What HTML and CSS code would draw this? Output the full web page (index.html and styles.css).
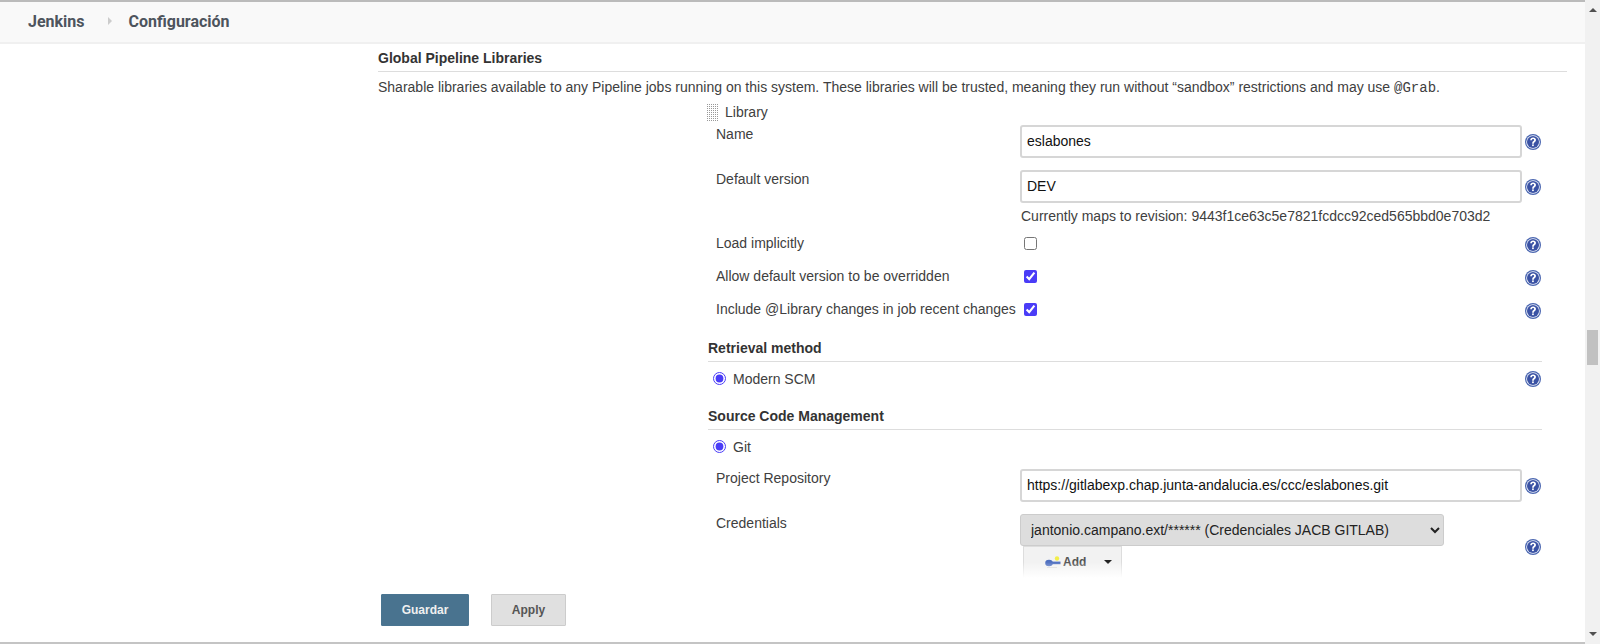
FILE: index.html
```html
<html lang="en">
<head>
<title>Configuración - Jenkins</title>
<link rel="stylesheet" href="styles.css">
</head>
<body>
<svg class="defs" width="0" height="0">
  <symbol id="help" viewBox="0 0 16 16">
    <circle cx="8" cy="8" r="8" fill="#4a66b0"/>
    <circle cx="8" cy="8" r="6.8" fill="#f0f3fa"/>
    <circle cx="8" cy="8" r="6" fill="#3a52a4"/>
    <path d="M5.2 6.3C5.2 4.6 6.4 3.6 8.1 3.6s2.9 1 2.9 2.4c0 2.2-2.2 2.1-2.2 3.7H7.1c0-2.5 2-2.6 2-3.6 0-.6-.4-1-1-1-.7 0-1.1.5-1.1 1.2z" fill="#fff"/>
    <rect x="7.1" y="10.4" width="1.7" height="1.7" fill="#fff"/>
  </symbol>
</svg>
<div class="page">
  <div class="main">
    <div class="breadcrumbs">
      <span class="crumb">Jenkins</span>
      <span class="crumb-arrow"></span>
      <span class="crumb">Configuración</span>
    </div>
    <div class="content">
      <div class="section">
        <div class="section-header">Global Pipeline Libraries</div>
        <div class="description">Sharable libraries available to any Pipeline jobs running on this system. These libraries will be trusted, meaning they run without “sandbox” restrictions and may use <code>@Grab</code>.</div>
        <div class="library">
          <div class="repeat-title"><span class="grip"></span>Library</div>

          <div class="row row-name">
            <div class="label">Name</div>
            <div class="control"><input class="text" type="text" value="eslabones"></div>
            <svg class="help"><use href="#help"/></svg>
          </div>
          <div class="row row-version">
            <div class="label">Default version</div>
            <div class="control"><input class="text" type="text" value="DEV"></div>
            <svg class="help"><use href="#help"/></svg>
          </div>
          <div class="revision">Currently maps to revision: 9443f1ce63c5e7821fcdcc92ced565bbd0e703d2</div>

          <div class="row row-check">
            <div class="label">Load implicitly</div>
            <div class="control"><input class="check" type="checkbox"></div>
            <svg class="help"><use href="#help"/></svg>
          </div>
          <div class="row row-check">
            <div class="label">Allow default version to be overridden</div>
            <div class="control"><input class="check" type="checkbox" checked></div>
            <svg class="help"><use href="#help"/></svg>
          </div>
          <div class="row row-check">
            <div class="label">Include @Library changes in job recent changes</div>
            <div class="control"><input class="check" type="checkbox" checked></div>
            <svg class="help"><use href="#help"/></svg>
          </div>

          <div class="sub-header retrieval">Retrieval method</div>
          <div class="radio-row">
            <label><input class="radio" type="radio" checked>Modern SCM</label>
            <svg class="help"><use href="#help"/></svg>
          </div>

          <div class="sub-header scm">Source Code Management</div>
          <div class="radio-row">
            <label><input class="radio" type="radio" checked>Git</label>
          </div>

          <div class="row row-repo">
            <div class="label">Project Repository</div>
            <div class="control"><input class="text" type="text" value="https://gitlabexp.chap.junta-andalucia.es/ccc/eslabones.git"></div>
            <svg class="help"><use href="#help"/></svg>
          </div>
          <div class="row row-cred">
            <div class="label">Credentials</div>
            <div class="control">
              <select class="select"><option>jantonio.campano.ext/****** (Credenciales JACB GITLAB)</option></select>
              <button class="add" type="button">
                <svg class="key" width="16" height="12" viewBox="0 0 16 12">
                  <circle cx="12" cy="2.5" r="2.2" fill="#f2ee4a"/>
                  <ellipse cx="4" cy="7" rx="3.8" ry="3.2" fill="#4f70c0"/>
                  <rect x="6" y="5.6" width="9.5" height="2.6" fill="#4f70c0"/>
                  <rect x="2" y="11" width="10" height="1" fill="#d8d8d8"/>
                </svg>
                <span>Add</span>
                <span class="caret"></span>
              </button>
            </div>
            <svg class="help"><use href="#help"/></svg>
          </div>
        </div>
      </div>
    </div>
    <div class="bottom-bar">
      <button class="btn btn-primary" type="button">Guardar</button>
      <button class="btn" type="button">Apply</button>
    </div>
  </div>
  <div class="scrollbar">
    <span class="arrow-up"></span>
    <div class="thumb"></div>
    <span class="arrow-down"></span>
  </div>
</div>
</body>
</html>
```

FILE: styles.css
```css
html, body {
  margin: 0;
  height: 100%;
  overflow: hidden;
}

body {
  font-family: "Liberation Sans", Arial, sans-serif;
  font-size: 14px;
  color: #333;
  background: #fff;
}

.defs {
  display: block;
  height: 0;
}

.page {
  display: flex;
  height: 644px;
}

.main {
  flex: 1;
  min-width: 0;
  display: flex;
  flex-direction: column;
  border-top: 2px solid #bbb;
  border-bottom: 2px solid #c4c4c4;
}

.breadcrumbs {
  flex: none;
  height: 38px;
  display: flex;
  align-items: center;
  padding: 0 0 2px 28px;
  background: #f9f9f9;
  border-bottom: 2px solid #f0f0f0;
  font-family: Roboto, sans-serif;
  font-size: 16px;
  font-weight: 700;
  color: #4d545d;
}

.crumb-arrow {
  width: 0;
  height: 0;
  margin: 0 17px 0 23px;
  border-left: 4px solid #ccc;
  border-top: 4px solid transparent;
  border-bottom: 4px solid transparent;
}

.content {
  flex: 1;
  min-height: 0;
  overflow: hidden;
  padding: 6px 18px 0 378px;
}

.section-header {
  height: 21px;
  font-weight: 700;
  line-height: 17px;
  border-bottom: 1px solid #ddd;
}

.description {
  margin-top: 6px;
  line-height: 18px;
  color: #404040;
  white-space: nowrap;
}

code {
  font-family: "Liberation Mono", monospace;
  font-size: 14px;
}

.library {
  margin: 6px 25px 0 330px;
}

.repeat-title {
  height: 18px;
  display: flex;
  align-items: center;
  color: #404040;
}

.grip {
  width: 12px;
  height: 17px;
  margin: 0 7px 0 -2px;
  background-image: conic-gradient(#999 25%, transparent 0);
  background-size: 2px 2px;
}

.row {
  display: flex;
  align-items: flex-start;
}

.label {
  width: 304px;
  margin-left: 8px;
  line-height: 18px;
  color: #404040;
  white-space: nowrap;
}

.control {
  flex: 1;
  min-width: 0;
}

.text {
  display: block;
  width: 100%;
  height: 33px;
  box-sizing: border-box;
  padding: 0 5px 2px;
  border: 2px solid #d6d6d6;
  border-radius: 3px;
  font-family: inherit;
  font-size: 14px;
  color: #111;
}

.help {
  flex: none;
  width: 16px;
  height: 16px;
  margin: 9px 1px 0 3px;
}

.row-name {
  margin-top: 4px;
}

.row-version {
  margin-top: 12px;
}

.revision {
  margin: 4px 0 0 313px;
  line-height: 18px;
  color: #404040;
  white-space: nowrap;
}

.row-check {
  height: 33px;
}

.revision + .row-check {
  margin-top: 9px;
}

.check {
  display: block;
  width: 13px;
  height: 13px;
  margin: 3px 0 0 4px;
  accent-color: #4a3cf7;
}

.row-check .help {
  margin-top: 3px;
}

.sub-header {
  height: 21px;
  font-weight: 700;
  line-height: 17px;
  border-bottom: 1px solid #ddd;
}

.retrieval {
  margin-top: 7px;
}

.scm {
  margin-top: 20px;
}

.radio-row {
  display: flex;
  justify-content: space-between;
  align-items: center;
  height: 18px;
  margin-top: 8px;
  padding-right: 1px;
}

.radio-row .help {
  margin: 0;
}

.radio-row label {
  display: flex;
  align-items: center;
  color: #404040;
  margin-left: 4px;
}

.radio {
  width: 13px;
  height: 13px;
  margin: 0 7px 2px 1px;
  accent-color: #4a3cf7;
}

.row-repo {
  margin-top: 13px;
}

.row-cred {
  margin-top: 12px;
}

.row-cred .help {
  margin-top: 25px;
}

.select {
  display: block;
  width: 424px;
  height: 32px;
  padding: 0 0 0 6px;
  border: 1px solid #ccc;
  border-radius: 3px;
  background-color: #ddd;
  font-family: inherit;
  font-size: 14px;
  color: #222;
}

.add {
  display: flex;
  align-items: center;
  width: 99px;
  height: 32px;
  margin-left: 3px;
  padding: 0 0 2px 21px;
  border: 1px solid #ddd;
  border-bottom: 0;
  background: #f2f2f2;
  font-family: inherit;
  font-size: 12px;
  font-weight: 700;
  color: #555;
}

.key {
  margin-right: 2px;
}

.caret {
  width: 0;
  height: 0;
  margin-left: 18px;
  border-top: 4px solid #222;
  border-left: 4px solid transparent;
  border-right: 4px solid transparent;
}

.bottom-bar {
  flex: none;
  position: relative;
  height: 64px;
  box-sizing: border-box;
  display: flex;
  gap: 22px;
  padding: 16px 0 0 381px;
  background: #fff;
}

.bottom-bar::before {
  content: "";
  position: absolute;
  left: 0;
  right: 0;
  top: -16px;
  height: 16px;
  background: linear-gradient(rgba(255, 255, 255, 0), #fff);
}

.btn {
  width: 75px;
  height: 32px;
  border: 1px solid #ccc;
  border-radius: 1px;
  background: #e0e0e0;
  font-family: inherit;
  font-size: 12px;
  font-weight: 700;
  color: #555;
}

.btn-primary {
  width: 88px;
  border-color: #4a7591;
  background: #49738f;
  color: #f0f0f0;
}

.scrollbar {
  flex: none;
  width: 15px;
  background: #f1f1f1;
  display: flex;
  flex-direction: column;
  align-items: center;
}

.arrow-up {
  width: 0;
  height: 0;
  margin-top: 8px;
  border-bottom: 4px solid #505050;
  border-left: 4px solid transparent;
  border-right: 4px solid transparent;
}

.thumb {
  width: 11px;
  height: 35px;
  margin-top: 318px;
  background: #c1c1c1;
}

.arrow-down {
  width: 0;
  height: 0;
  margin-top: auto;
  margin-bottom: 8px;
  border-top: 4px solid #505050;
  border-left: 4px solid transparent;
  border-right: 4px solid transparent;
}
```
